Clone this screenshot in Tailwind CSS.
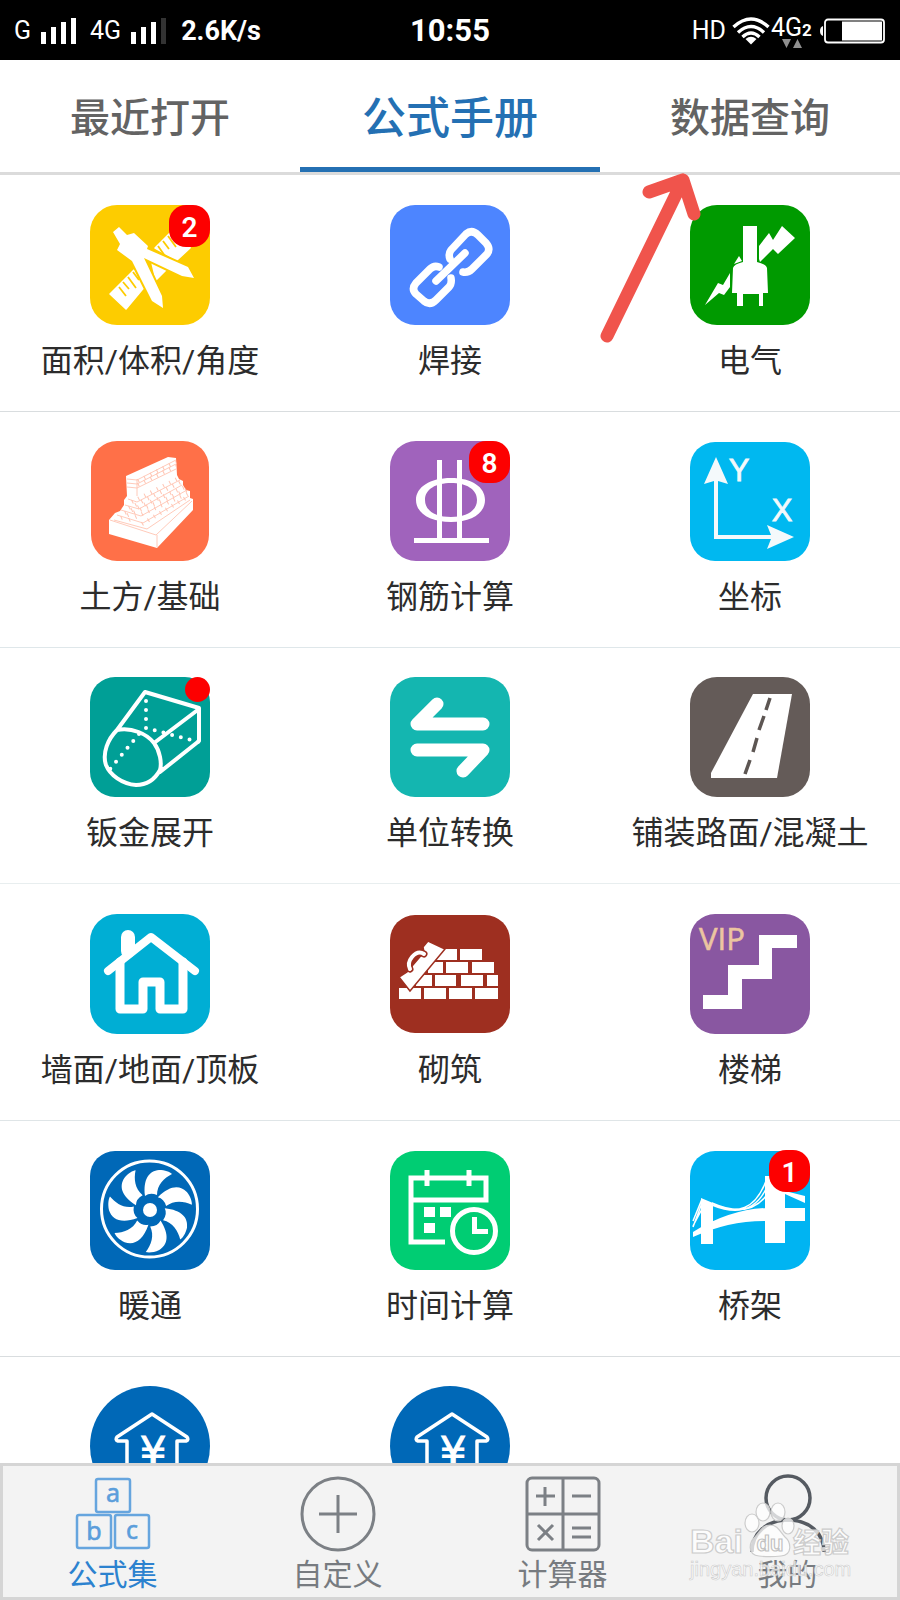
<!DOCTYPE html>
<html lang="zh-CN">
<head>
<meta charset="utf-8">
<meta name="viewport" content="width=device-width, initial-scale=1">
<title>公式手册</title>
<script src="https://cdn.jsdelivr.net/npm/@tailwindcss/browser@4"></script>
</head>
<body class="bg-white font-['Roboto','Noto_Sans_CJK_SC',sans-serif] text-[#2c2c2c]">
<div class="relative flex h-screen flex-col overflow-hidden">

  <!-- Status bar -->
  <header class="grid h-[60px] shrink-0 grid-cols-[1fr_auto_1fr] items-center bg-black px-[14px] pt-[2px] text-white">
    <div class="flex items-center gap-[10px]">
      <span class="text-[25px]">G</span>
      <svg class="h-[26px] w-[35px]" viewBox="0 0 35 26" fill="#fff" aria-hidden="true"><path d="M0 14h5v12H0zM10 9h5v17h-5zM20 4h5v22h-5zM30 0h5v26h-5z"/></svg>
      <span class="ml-[4px] text-[25px]">4G</span>
      <svg class="h-[26px] w-[35px]" viewBox="0 0 35 26" fill="#fff" aria-hidden="true"><path d="M0 14h5v12H0zM10 9h5v17h-5zM20 4h5v22h-5z"/><path fill="#333" d="M30 0h5v26h-5z"/></svg>
      <span class="ml-[5px] text-[27px] font-bold">2.6K/s</span>
    </div>
    <time class="text-[31px] font-bold">10:55</time>
    <div class="flex items-center justify-end">
      <span class="text-[25px]">HD</span>
      <svg class="ml-[6px] h-[28px] w-[38px]" viewBox="0 0 38 28" fill="none" stroke="#fff" stroke-width="3.4" aria-hidden="true"><path d="M1.500 10Q19-6 36.500 10M6 15.500Q19 3.500 32 15.500M10.500 20Q19 12 27.500 20"/><path fill="#fff" stroke="none" d="M13.500 22Q19 17.500 24.500 22L19 27.500z"/></svg>
      <svg class="h-[40px] w-[50px]" viewBox="0 0 50 40" fill="#fff" aria-hidden="true"><text x="1" y="25" font-size="25">4G</text><text x="32" y="25" font-size="17" font-weight="700">2</text><path fill="#8f8f8f" d="M12 28h9l-4.500 9zM23 37h9l-4.500-9z"/></svg>
      <svg class="h-[26px] w-[66px]" viewBox="0 0 66 26" aria-hidden="true"><path fill="#fff" d="M3 8Q0 9 0 13t3 5z"/><rect x="5" y="1.500" width="59" height="23" rx="3" fill="#000" stroke="#fff" stroke-width="1.800"/><path fill="#fff" d="M22 3.500h40v19H22z"/></svg>
    </div>
  </header>

  <!-- Section tabs -->
  <div role="tablist" class="grid h-[115px] shrink-0 grid-cols-3 border-b-[3px] border-[#dbdbdb] text-[40px] font-medium text-[#636363]">
    <button role="tab" aria-selected="false" class="border-b-[5px] border-transparent pt-[10px]">最近打开</button>
    <button role="tab" aria-selected="true" class="border-b-[5px] border-[#2470b3] pt-[10px] text-[44px] text-[#2470b3]">公式手册</button>
    <button role="tab" aria-selected="false" class="border-b-[5px] border-transparent pt-[10px]">数据查询</button>
  </div>

  <!-- Formula categories -->
  <main class="min-h-0 flex-1 overflow-hidden text-[32px] leading-10">
    <div class="grid grid-cols-3 border-b border-[#d9dddf] pt-[30px] pb-[30px]">
      <a href="#area" class="flex flex-col items-center gap-[16px]">
        <span class="relative">
          <svg class="size-[120px]" viewBox="0 0 120 120" aria-hidden="true"><rect width="120" height="120" rx="27" fill="#fdcc00"/>
            <path fill="#fff" stroke="#fff" stroke-width="1.500" stroke-linejoin="round" d="M20 89 44 65l12 15-20 24zM62 58l14 7-10 10zM65 43l15-15h20v15L87 55z"/>
            <path stroke="#fdcc00" stroke-width="1.800" d="m29 82 7 9m-3-14 6 7m-1-12 8 11m-3-16 6 8M68 41l7 10m-2-15 6 8m-1-13 8 11m-3-16 6 8"/>
            <path fill="#fff" stroke="#fdcc00" stroke-width="4" paint-order="stroke" d="m23 27 6-5 8 8 7-2 14 13-1 3 41 18 6 11-12-2-38-18 18 38 1 12-11-7-20-40-15-11 3-6z"/></svg>
          <span class="absolute top-0 right-0 flex h-[42px] w-[41px] items-center justify-center rounded-[17px] bg-[#fd0000] pt-[3px] text-[28px] font-semibold text-white">2</span>
        </span>
        <span>面积/体积/角度</span>
      </a>
      <a href="#weld" class="flex flex-col items-center gap-[16px]">
        <svg class="size-[120px]" viewBox="0 0 120 120" aria-hidden="true"><rect width="120" height="120" rx="25" fill="#4d85ff"/>
          <g fill="none" stroke="#fff" stroke-width="7.500" stroke-linecap="round" stroke-linejoin="round"><path d="M49 62Q44 60 40 64L26 78Q21 84 26 89L34 96Q40 101 46 95L59 82Q62 79 61 73M73 67Q78 68 82 64L97 49Q101 44 96 38L88 30Q82 24 76 29L61 45Q58 49 60 54M46 76 75 48"/></g></svg>
        <span>焊接</span>
      </a>
      <a href="#electric" class="flex flex-col items-center gap-[16px]">
        <svg class="size-[120px]" viewBox="0 0 120 120" aria-hidden="true"><rect width="120" height="120" rx="27" fill="#009a00"/>
          <path fill="#fff" d="M53 21h14v36q9 2 10 6l1 25h-5v13h-4V89H53v12h-6V88h-5l1-25q1-4 10-6zM69 41l10-13 4 7 9-14 13 12-17 16-5-5-13 13-1-3zM49 51l3 5-8 3zM40 68v14l-6 8-5-2-14 12 13-22 5 2z"/></svg>
        <span>电气</span>
      </a>
    </div>

    <div class="grid grid-cols-3 border-b border-[#dfe7ea] pt-[29px] pb-[30px]">
      <a href="#earth" class="flex flex-col items-center gap-[16px]">
        <svg class="size-[120px]" viewBox="0 0 120 120" aria-hidden="true"><rect x="1" width="118" height="120" rx="26" fill="#ff7048"/>
          <path fill="#fff" d="m36 35 42-19 8 1 1 17 2 4 4 2v4l3 5 4 1v7l3 1v11l-36 38-48-14V79l6-7 5-2 4-6v-5l3-4z"/>
          <g fill="none" stroke="#ffc4b2" stroke-width=".9"><path d="m37 38 10 1 39-20M37 42l10 1 39-20M37 46l10 1 39-19M38 58l9 3 43-22M35 64l14 4 43-24M31 69l20 6 46-26M27 74l26 8 46-27M24 79l33 9 43-29M20 79l46 15 36-34M67 94v12M47 38v17"/><path stroke-dasharray="1 6" stroke-width="4" d="m48 40 38-19M48 44l38-19M42 61l45-23M39 67l52-26M35 72l60-26M31 77l66-28M39 79l60-27M52 83l47-28"/></g></svg>
        <span>土方/基础</span>
      </a>
      <a href="#rebar" class="flex flex-col items-center gap-[16px]">
        <span class="relative">
          <svg class="size-[120px]" viewBox="0 0 120 120" aria-hidden="true"><rect width="120" height="120" rx="26" fill="#a063bc"/>
            <path fill="#fff" fill-rule="evenodd" d="M61 37c21 0 34 9 34 22S82 81 61 81 26 72 26 59s14-22 35-22zm0 5c-15 0-26 6-26 17s11 17 26 17 26-6 26-17-11-17-26-17z"/><path fill="#fff" d="M47 19h5v78h15V19h5v78h27v5H24v-5h23z"/></svg>
          <span class="absolute top-0 right-0 flex h-[42px] w-[41px] items-center justify-center rounded-[17px] bg-[#fd0000] pt-[3px] text-[28px] font-semibold text-white">8</span>
        </span>
        <span>钢筋计算</span>
      </a>
      <a href="#coord" class="flex flex-col items-center gap-[16px]">
        <svg class="size-[120px]" viewBox="0 0 120 120" aria-hidden="true"><rect y="1" width="120" height="119" rx="25" fill="#00b8f0"/>
          <path fill="#f4f9fb" d="m26 16 12 27-10-3v54h53l-4-10 27 12-27 12 4-10H24V40l-10 3z"/><g fill="#f4f9fb" stroke="#f4f9fb" stroke-width=".8" font-family="Liberation Sans" font-size="31" text-anchor="middle"><text x="49" y="40">Y</text><text x="92" y="80">X</text></g></svg>
        <span>坐标</span>
      </a>
    </div>

    <div class="grid grid-cols-3 border-b border-[#e8eeef] pt-[29px] pb-[30px]">
      <a href="#sheet" class="flex flex-col items-center gap-[16px]">
        <span class="relative">
          <svg class="size-[120px]" viewBox="0 0 120 120" aria-hidden="true"><rect width="120" height="120" rx="25" fill="#009f96"/>
            <g fill="none" stroke="#fff" stroke-width="4" stroke-linecap="round" stroke-linejoin="round"><path d="M27 53 55 15l54 16v33L70 95M64 66l45-34M27 53C42 50 57 57 64 66 70 74 72 86 70 93 64 104 56 108 46 108 32 107 20 98 16 88 12 76 18 62 27 53z"/><path stroke-dasharray="0 9" d="M56 24v27l53 14M49 57 20 92"/></g></svg>
          <span class="absolute top-0 right-0 size-[25px] rounded-full bg-[#fd0000]"></span>
        </span>
        <span>钣金展开</span>
      </a>
      <a href="#unit" class="flex flex-col items-center gap-[16px]">
        <svg class="size-[120px]" viewBox="0 0 120 120" aria-hidden="true"><rect width="120" height="120" rx="25" fill="#14b6b0"/>
          <path fill="none" stroke="#fff" stroke-width="13" stroke-linecap="round" stroke-linejoin="round" d="M47 27 27 47h66M27 73h66L73 94"/></svg>
        <span>单位转换</span>
      </a>
      <a href="#road" class="flex flex-col items-center gap-[16px]">
        <svg class="size-[120px]" viewBox="0 0 120 120" aria-hidden="true"><rect width="120" height="120" rx="27" fill="#645b58"/>
          <path fill="#fff" d="M63 17h39l-15 84H21v-5z"/><path stroke="#5d5653" stroke-width="3.500" d="m80 21-4 12m-2 6-5 14m-2 8-4 14m-3 8-5 14"/></svg>
        <span>铺装路面/混凝土</span>
      </a>
    </div>

    <div class="grid grid-cols-3 border-b border-[#dfe5e7] pt-[30px] pb-[30px]">
      <a href="#wall" class="flex flex-col items-center gap-[16px]">
        <svg class="size-[120px]" viewBox="0 0 120 120" aria-hidden="true"><rect width="120" height="120" rx="27" fill="#00aed4"/>
          <g fill="none" stroke="#fff" stroke-width="9" stroke-linecap="round" stroke-linejoin="round"><path stroke-width="8" d="m18 57 43-34 44 34"/><path d="M30 48v47h23V68h17v27h23V48"/><path stroke-width="14" d="M38 23v14"/></g></svg>
        <span>墙面/地面/顶板</span>
      </a>
      <a href="#masonry" class="flex flex-col items-center gap-[16px]">
        <svg class="size-[120px]" viewBox="0 0 120 120" aria-hidden="true"><rect y="1" width="120" height="118" rx="25" fill="#9e2f20"/>
          <path fill="#fff" d="M47 35h20v11H47zM70 35h22v11H70zM38 48h15v11H38zM56 48h22v11H56zM82 48h22v11H82zM26 61h16v11H26zM45 61h21v11H45zM71 61h22v11H71zM97 61h11v11H97zM9 74h22v11H9zM34 74h22v11H34zM59 74h23v11H59zM85 74h23v11H85z"/>
          <path fill="#fff" stroke="#9e2f20" stroke-width="1.500" d="m38 27 17 8-35 42L9 63l8-5 17-20-1-5z"/>
          <path fill="none" stroke="#9e2f20" stroke-width="7" stroke-linecap="round" d="M34 40Q28 36 22 43 17 49 20 55"/><path fill="none" stroke="#fff" stroke-width="4" stroke-linecap="round" d="M34 40Q28 36 22 43 17 49 20 55"/></svg>
        <span>砌筑</span>
      </a>
      <a href="#stairs" class="flex flex-col items-center gap-[16px]">
        <svg class="size-[120px]" viewBox="0 0 120 120" aria-hidden="true"><rect width="120" height="120" rx="25" fill="#8957a1"/>
          <path fill="#fff" d="M69 21h38v13H82v31H52v30H13V81h25V51h31z"/><text x="9" y="36" fill="#ecc5a0" stroke="#ecc5a0" stroke-width=".6" font-family="Open Sans" font-size="31">VIP</text></svg>
        <span>楼梯</span>
      </a>
    </div>

    <div class="grid grid-cols-3 border-b border-[#d9dddf] pt-[30px] pb-[30px]">
      <a href="#hvac" class="flex flex-col items-center gap-[15px]">
        <svg class="size-[120px]" viewBox="0 0 120 120" aria-hidden="true"><rect width="120" height="119" rx="25" fill="#0068b7"/>
          <circle cx="59.500" cy="58" r="48" fill="none" stroke="#fff" stroke-width="3"/><circle cx="60" cy="59" r="7" fill="#fff"/>
          <defs><path id="blade" d="M55 45C53 28 59 20 69 19 75 19 80 21 82 23 74 27 67 34 67 44Q60 41 55 45z"/></defs>
          <g fill="#fff"><use href="#blade"/><use href="#blade" transform="rotate(51.400 60 59)"/><use href="#blade" transform="rotate(102.800 60 59)"/><use href="#blade" transform="rotate(154.300 60 59)"/><use href="#blade" transform="rotate(205.700 60 59)"/><use href="#blade" transform="rotate(257.100 60 59)"/><use href="#blade" transform="rotate(308.600 60 59)"/></g></svg>
        <span>暖通</span>
      </a>
      <a href="#time" class="flex flex-col items-center gap-[15px]">
        <svg class="size-[120px]" viewBox="0 0 120 120" aria-hidden="true"><rect width="120" height="119" rx="25" fill="#00cd73"/>
          <g fill="none" stroke="#fff" stroke-width="5"><path d="M21 27h75v22H21zM21 47v44h34M37 19v16M79 19v16"/><circle cx="84" cy="80" r="21.500"/><path d="M84.500 66v14.500H98"/></g><path fill="#fff" d="M34 56h11v10H34zM50 56h11v10H50zM34 72h11v10H34z"/></svg>
        <span>时间计算</span>
      </a>
      <a href="#bridge" class="flex flex-col items-center gap-[15px]">
        <span class="relative">
          <svg class="size-[120px]" viewBox="0 0 120 120" aria-hidden="true"><rect width="120" height="119" rx="25" fill="#00b4f2"/>
            <path fill="#fff" d="m11 47 12 5v41H11zM75 25h20v67H75zM3 81Q38 59 75 57h40v13H75Q38 70 3 86zM95 40l20 5v7l-20-9z"/>
            <path fill="none" stroke="#fff" stroke-width="1.500" d="M12 48 3 70M12 52 3 76M12 58 3 75M22 52Q60 72 76 30M22 54Q60 70 76 38M22 52Q58 68 76 45"/></svg>
          <span class="absolute top-[-1px] right-0 flex h-[42px] w-[41px] items-center justify-center rounded-[17px] bg-[#fd0000] pt-[3px] text-[28px] font-semibold text-white">1</span>
        </span>
        <span>桥架</span>
      </a>
    </div>

    <div class="grid grid-cols-3 pt-[29px]">
      <a href="#cost" class="flex justify-center">
        <svg class="size-[120px]" viewBox="0 0 120 120" aria-hidden="true"><circle cx="60" cy="60" r="60" fill="#0068b7"/><path fill="none" stroke="#fff" stroke-width="3.500" stroke-linejoin="round" d="M37 90V55H28q-3-1-1-4l35-23 35 23q2 3-1 4h-9v35"/><text x="63" y="81" fill="#fff" stroke="#fff" font-family="DejaVu Sans" font-size="42" text-anchor="middle">¥</text></svg>
      </a>
      <a href="#price" class="flex justify-center">
        <svg class="size-[120px]" viewBox="0 0 120 120" aria-hidden="true"><circle cx="60" cy="60" r="60" fill="#0068b7"/><path fill="none" stroke="#fff" stroke-width="3.500" stroke-linejoin="round" d="M37 90V55H28q-3-1-1-4l35-23 35 23q2 3-1 4h-9v35"/><text x="63" y="81" fill="#fff" stroke="#fff" font-family="DejaVu Sans" font-size="42" text-anchor="middle">¥</text></svg>
      </a>
    </div>
  </main>

  <!-- Bottom navigation -->
  <nav class="grid h-[137px] shrink-0 grid-cols-4 bg-[#f3f3f3] pt-[11px] text-[30px] leading-10 text-[#777b80] shadow-[inset_0_0_0_3px_#d5d5d5]">
    <a href="#formulas" class="flex flex-col items-center gap-px text-[#2c82cf]">
      <svg class="size-[80px]" viewBox="0 0 80 80" fill="none" stroke="#66a5de" stroke-width="2.500" aria-hidden="true"><rect x="23" y="5" width="34" height="33" rx="2"/><rect x="4" y="41" width="34" height="33" rx="2"/><rect x="42" y="41" width="34" height="33" rx="2"/><g fill="#5b9edb" stroke="#5b9edb" stroke-width=".6" font-family="Noto Sans" font-size="25" text-anchor="middle"><text x="40" y="28">a</text><text x="21" y="66">b</text><text x="59" y="65">c</text></g></svg>
      <span>公式集</span>
    </a>
    <a href="#custom" class="flex flex-col items-center gap-px">
      <svg class="size-[80px]" viewBox="0 0 80 80" fill="none" stroke="#7c8085" stroke-width="3" aria-hidden="true"><circle cx="40" cy="40" r="36"/><path d="M40 21v38M21 40h38"/></svg>
      <span>自定义</span>
    </a>
    <a href="#calculator" class="flex flex-col items-center gap-px">
      <svg class="size-[80px]" viewBox="0 0 80 80" fill="none" stroke="#7c8085" stroke-width="3" aria-hidden="true"><rect x="4" y="4" width="72" height="72" rx="5"/><path d="M40 4v72M4 40h72M13 22h19M22 13v19M49 22h19M15 51l15 15m0-15L15 66M49 54h19M49 63h19"/></svg>
      <span>计算器</span>
    </a>
    <a href="#me" class="flex flex-col items-center gap-px">
      <svg class="size-[80px]" viewBox="0 0 80 80" fill="none" stroke="#555a61" stroke-width="3.500" aria-hidden="true"><circle cx="40" cy="24" r="22"/><path d="M4 78C4 59 19 46 40 46s36 13 36 32"/></svg>
      <span>我的</span>
    </a>
  </nav>

  <!-- Watermark -->
  <svg class="pointer-events-none absolute right-[46px] bottom-[14px] h-[100px] w-[168px]" viewBox="0 0 168 100" aria-hidden="true">
    <g fill="#fff" fill-opacity=".75" stroke="#cccccc" stroke-width="1.200">
      <ellipse cx="66" cy="37" rx="7" ry="9"/><ellipse cx="77" cy="26" rx="7" ry="9"/><ellipse cx="92" cy="26" rx="7" ry="9"/><ellipse cx="102" cy="40" rx="6" ry="8"/>
      <path d="M84 39c8 0 10 7 15 12 6 5 8 18-4 19-8 1-14 1-22 0-12-1-10-14-4-19 5-5 7-12 15-12z"/>
      <text x="4" y="67" font-family="Liberation Sans" font-weight="700" font-size="34">Bai</text>
      <text x="107" y="67" font-family="Noto Sans CJK SC" font-weight="700" font-size="28">经验</text>
      <text x="4" y="90" font-family="Liberation Sans" font-size="20" stroke-width=".6">jingyan.baidu.com</text>
    </g>
    <text x="84" y="65" fill="#fff" stroke="#c2c2c2" stroke-width="1.200" font-family="Liberation Sans" font-weight="700" font-size="22" text-anchor="middle">du</text>
  </svg>

  <!-- Pointer arrow towards the data query tab -->
  <svg class="pointer-events-none absolute top-[165px] left-[66%] h-[185px] w-[120px]" viewBox="594 165 120 185" fill="none" stroke="#f0544c" stroke-width="13" stroke-linecap="round" stroke-linejoin="round" aria-hidden="true"><path d="m607 336 76-156M649 192l34-12 11 34"/></svg>
</div>
</body>
</html>
